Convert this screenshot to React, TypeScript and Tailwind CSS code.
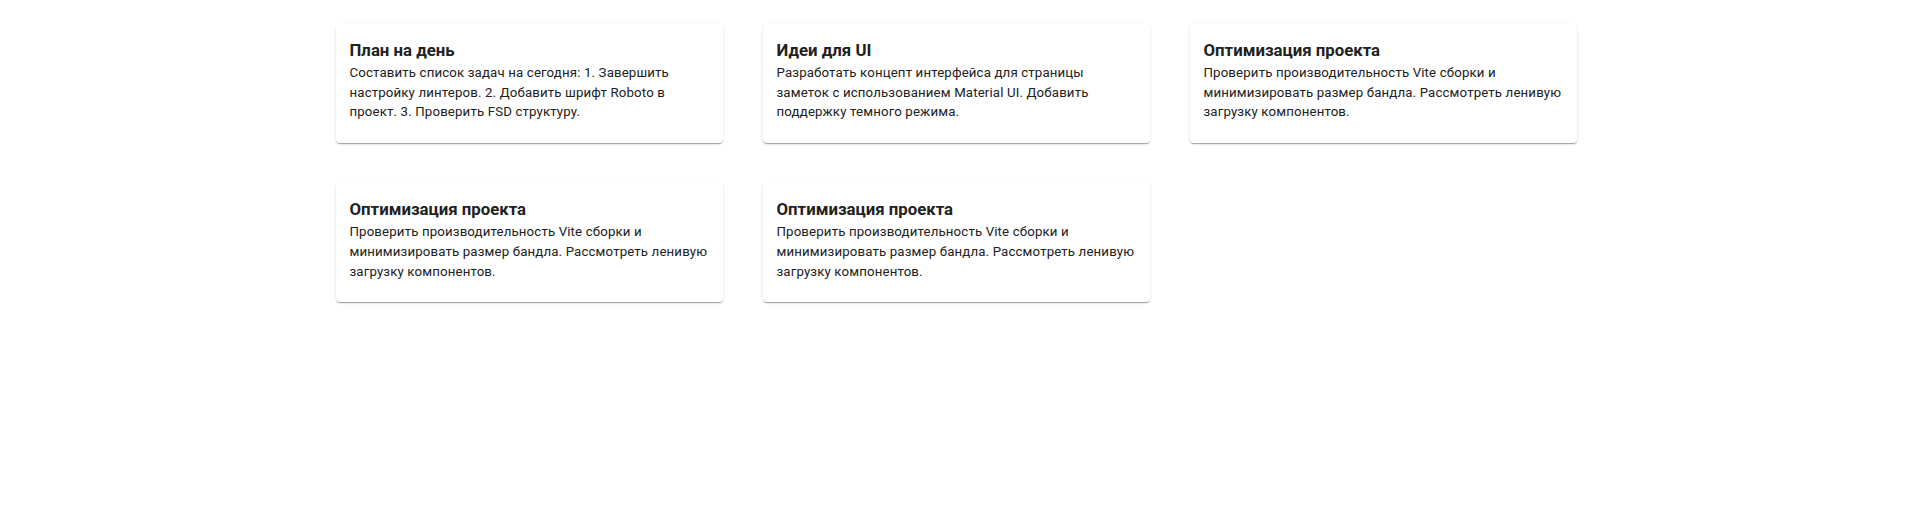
const notes = [
  {
    title: "План на день",
    text: "Составить список задач на сегодня: 1. Завершить настройку линтеров. 2. Добавить шрифт Roboto в проект. 3. Проверить FSD структуру.",
  },
  {
    title: "Идеи для UI",
    text: "Разработать концепт интерфейса для страницы заметок с использованием Material UI. Добавить поддержку темного режима.",
  },
  {
    title: "Оптимизация проекта",
    text: "Проверить производительность Vite сборки и минимизировать размер бандла. Рассмотреть ленивую загрузку компонентов.",
  },
  {
    title: "Оптимизация проекта",
    text: "Проверить производительность Vite сборки и минимизировать размер бандла. Рассмотреть ленивую загрузку компонентов.",
  },
  {
    title: "Оптимизация проекта",
    text: "Проверить производительность Vite сборки и минимизировать размер бандла. Рассмотреть ленивую загрузку компонентов.",
  },
];

function NoteCard({ title, text }: { title: string; text: string }) {
  return (
    <div className="rounded bg-white px-[14px] pt-[14px] pb-[21px] shadow-[0_2px_1px_-1px_rgba(0,0,0,0.2),0_1px_1px_0_rgba(0,0,0,0.14),0_1px_3px_0_rgba(0,0,0,0.12)]">
      <h3 className="text-[16.8px] leading-[25px] font-bold text-[#212121]">{title}</h3>
      <p className="text-[13.25px] leading-[19.7px] tracking-[0.01071em] text-[#212121]">{text}</p>
    </div>
  );
}

export default function App() {
  return (
    <div className="min-h-[507px] bg-white pt-6 font-['Roboto',sans-serif]">
      {/* сетка заметок */}
      <div className="mx-auto grid w-[1241px] grid-cols-3 gap-10">
        {notes.map((note, i) => (
          <NoteCard key={i} title={note.title} text={note.text} />
        ))}
      </div>
    </div>
  );
}
